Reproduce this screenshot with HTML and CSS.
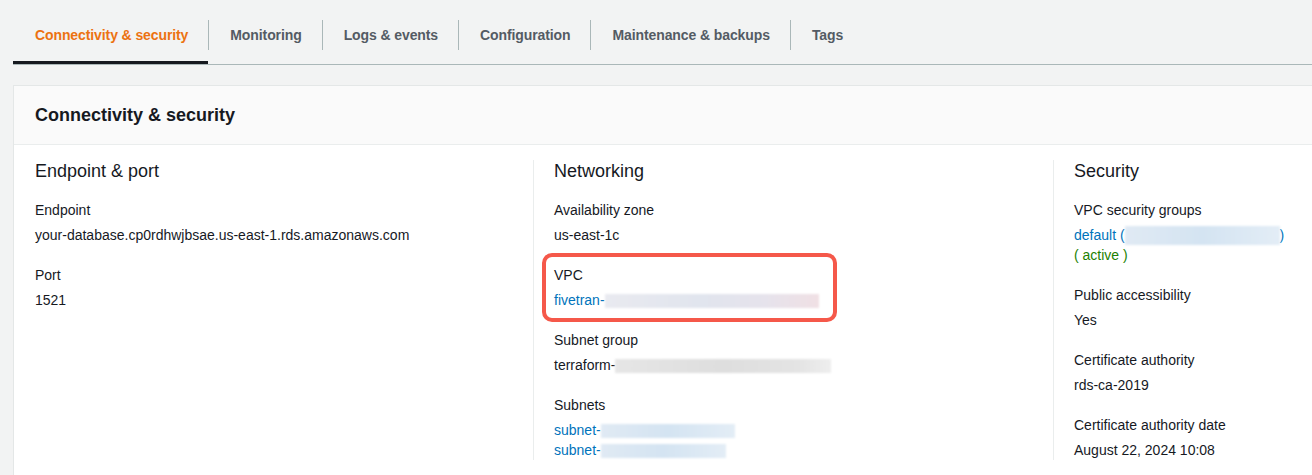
FILE: index.html
```html
<!DOCTYPE html>
<html lang="en">
<head>
<meta charset="utf-8">
<title>Connectivity &amp; security</title>
<link rel="stylesheet" href="styles.css">
</head>
<body>
<div class="tabs">
  <div class="tab tab-first active">Connectivity &amp; security</div>
  <span class="sep"></span>
  <div class="tab">Monitoring</div>
  <span class="sep"></span>
  <div class="tab">Logs &amp; events</div>
  <span class="sep"></span>
  <div class="tab">Configuration</div>
  <span class="sep"></span>
  <div class="tab">Maintenance &amp; backups</div>
  <span class="sep"></span>
  <div class="tab">Tags</div>
</div>

<div class="card">
  <div class="card-header"><h2>Connectivity &amp; security</h2></div>
  <div class="card-body">
    <div class="col col-first">
      <h3>Endpoint &amp; port</h3>
      <div class="item">
        <div class="label">Endpoint</div>
        <div class="value">your-database.cp0rdhwjbsae.us-east-1.rds.amazonaws.com</div>
      </div>
      <div class="item">
        <div class="label">Port</div>
        <div class="value">1521</div>
      </div>
    </div>
    <div class="col">
      <h3>Networking</h3>
      <div class="item">
        <div class="label">Availability zone</div>
        <div class="value">us-east-1c</div>
      </div>
      <div class="item highlighted">
        <div class="label">VPC</div>
        <div class="value"><span class="link">fivetran-</span><span class="redact redact-vpc"></span></div>
        <div class="highlight-box"></div>
      </div>
      <div class="item">
        <div class="label">Subnet group</div>
        <div class="value">terraform-<span class="redact redact-gray"></span></div>
      </div>
      <div class="item">
        <div class="label">Subnets</div>
        <div class="value"><span class="link">subnet-</span><span class="redact redact-blue w134"></span></div>
        <div class="value"><span class="link">subnet-</span><span class="redact redact-blue w125"></span></div>
      </div>
    </div>
    <div class="col">
      <h3>Security</h3>
      <div class="item">
        <div class="label">VPC security groups</div>
        <div class="value"><span class="link">default (</span><span class="redact redact-blue redact-tall"></span><span class="link">)</span></div>
        <div class="value status">( active )</div>
      </div>
      <div class="item">
        <div class="label">Public accessibility</div>
        <div class="value">Yes</div>
      </div>
      <div class="item">
        <div class="label">Certificate authority</div>
        <div class="value">rds-ca-2019</div>
      </div>
      <div class="item">
        <div class="label">Certificate authority date</div>
        <div class="value">August 22, 2024 10:08</div>
      </div>
    </div>
  </div>
</div>
</body>
</html>
```

FILE: styles.css
```css
html, body {
  margin: 0;
  padding: 0;
  overflow: hidden;
}

body {
  background: #f2f3f3;
  font-family: "Liberation Sans", Arial, sans-serif;
  color: #16191f;
  font-size: 14px;
  line-height: 20px;
}

.tabs {
  display: flex;
  align-items: flex-start;
  margin-left: 13px;
  border-bottom: 1px solid #aab7b8;
  height: 64px;
}

.tab {
  padding: 24px 20px 15px 21px;
  line-height: 22px;
  font-weight: bold;
  font-size: 14px;
  letter-spacing: -0.1px;
  color: #545b64;
  border-bottom: 3px solid transparent;
  white-space: nowrap;
}

.tab-first {
  padding-left: 22px;
}

.tab.active {
  color: #ec7211;
  border-bottom-color: #16191f;
}

.sep {
  width: 1px;
  height: 30px;
  margin-top: 20px;
  background: #aab7b8;
  flex: none;
}

.card {
  margin: 20px -20px 0 13px;
  border: 1px solid #e4e7e7;
  border-bottom: none;
  background: #fff;
}

.card-header {
  background: #fafafa;
  padding: 18px 20px 18px 21px;
  border-bottom: 1px solid #eaeded;
}

.card-header h2 {
  margin: 0;
  font-size: 18px;
  line-height: 22px;
  font-weight: bold;
  color: #16191f;
}

.card-body {
  display: grid;
  grid-template-columns: 519px 520px 1fr;
  padding: 15px 0 16px;
}

.col {
  border-left: 1px solid #eaeded;
  padding: 0 20px;
}

.col-first {
  border-left: none;
  padding-left: 21px;
}

.col h3 {
  margin: 0 0 18px;
  font-size: 18px;
  line-height: 22px;
  font-weight: normal;
  color: #16191f;
}

.item {
  margin-bottom: 20px;
}

.item:last-child {
  margin-bottom: 0;
}

.label {
  margin-bottom: 5px;
  color: #16191f;
}

.value {
  color: #16191f;
  white-space: nowrap;
}

.link {
  color: #0073bb;
}

.status {
  color: #1d8102;
}

.highlighted {
  position: relative;
}

.highlight-box {
  position: absolute;
  left: -12px;
  top: -12px;
  width: 287px;
  height: 61px;
  border: 4px solid #f5584a;
  border-radius: 10px;
}

.redact {
  display: inline-block;
  height: 14px;
  vertical-align: -3px;
  filter: blur(1px);
}

.redact-vpc {
  width: 214px;
  background: linear-gradient(90deg, #e9eaf0 0%, #e1e5ee 45%, #e6e3ec 75%, #f0e0e4 100%);
}

.redact-gray {
  width: 216px;
  background: linear-gradient(90deg, #e6e6e6 0%, #dedede 50%, #e4e4e4 85%, #eeeeee 100%);
}

.redact-blue {
  background: linear-gradient(90deg, #e0eaf4 0%, #d4e4f2 50%, #e3edf6 100%);
}

.w134 {
  width: 134px;
}

.w125 {
  width: 125px;
}

.redact-tall {
  width: 155px;
  height: 19px;
  vertical-align: -5px;
}
```
